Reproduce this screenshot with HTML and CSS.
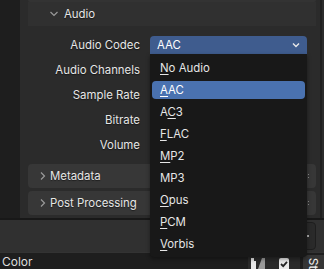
FILE: index.html
```html
<!DOCTYPE html>
<html lang="en">
<head>
    <meta charset="UTF-8">
    <meta name="viewport" content="width=device-width, initial-scale=1.0">
    <title>Output Properties - Audio</title>
    <link rel="stylesheet" href="styles.css">
</head>
<body>
    <div class="screen">
        <div class="top">
            <div class="gutter"></div>
            <div class="props">
                <div class="parent-edge"></div>

                <div class="subpanel">
                    <div class="sub-header">
                        <svg class="chev" width="10" height="10" viewBox="0 0 10 10"><polyline points="1.5,3 5,6.5 8.5,3" /></svg>
                        <span>Audio</span>
                    </div>
                    <div class="sub-body">
                        <div class="row">
                            <span class="label">Audio Codec</span>
                            <div class="field select open">
                                <span>AAC</span>
                                <svg class="drop" width="8" height="6" viewBox="0 0 8 6"><polyline points="1,1.5 4,4.5 7,1.5" /></svg>
                            </div>
                        </div>
                        <div class="row">
                            <span class="label">Audio Channels</span>
                            <div class="field select"><span>Stereo</span></div>
                        </div>
                        <div class="row">
                            <span class="label">Sample Rate</span>
                            <div class="field select"><span>48 kHz</span></div>
                        </div>
                        <div class="row">
                            <span class="label">Bitrate</span>
                            <div class="field num"><span>192</span></div>
                        </div>
                        <div class="row">
                            <span class="label">Volume</span>
                            <div class="field num"><span>1.000</span></div>
                        </div>
                    </div>
                </div>

                <div class="subpanel closed">
                    <div class="sub-header">
                        <svg class="chev" width="10" height="10" viewBox="0 0 10 10"><polyline points="3,1.5 6.5,5 3,8.5" /></svg>
                        <span>Metadata</span>
                        <span class="grip"></span>
                    </div>
                </div>
                <div class="subpanel closed">
                    <div class="sub-header">
                        <svg class="chev" width="10" height="10" viewBox="0 0 10 10"><polyline points="3,1.5 6.5,5 3,8.5" /></svg>
                        <span>Post Processing</span>
                        <span class="grip"></span>
                    </div>
                </div>
            </div>
            <div class="scroll"><div class="scroll-line"></div></div>
        </div>

        <div class="mid">
            <div class="mid-widget"><span class="dot"></span></div>
        </div>

        <div class="status">
            <span class="status-text">Color</span>
            <div class="status-tools">
                <svg class="tool-icon" width="16" height="12" viewBox="0 0 16 12">
                    <rect x="1" y="1" width="5" height="11" fill="#e8e8e8" />
                    <rect x="4" y="1" width="2" height="3" fill="#2a2a2a" />
                    <polygon points="8,12 12,1 15,1 15,12" fill="#9a9a9a" />
                </svg>
                <span class="check">
                    <svg width="10" height="10" viewBox="0 0 10 10"><polyline points="2,5 4.2,7.2 8,2.8" /></svg>
                </span>
            </div>
            <div class="side-tab"><span>St</span></div>
        </div>

        <div class="menu">
            <div class="item"><span><u>N</u>o Audio</span></div>
            <div class="item active"><span><u>A</u>AC</span></div>
            <div class="item"><span>A<u>C</u>3</span></div>
            <div class="item"><span><u>F</u>LAC</span></div>
            <div class="item"><span><u>M</u>P2</span></div>
            <div class="item"><span>MP3</span></div>
            <div class="item"><span><u>O</u>pus</span></div>
            <div class="item"><span><u>P</u>CM</span></div>
            <div class="item"><span><u>V</u>orbis</span></div>
        </div>
    </div>
</body>
</html>
```

FILE: styles.css
```css
* {
    box-sizing: border-box;
}
body {
    margin: 0;
    font-family: "Inter", "DejaVu Sans", sans-serif;
    font-size: 11.4px;
    color: #e6e6e6;
    background: #1d1d1d;
    overflow: hidden;
}
.screen {
    position: relative;
    width: 324px;
    height: 269px;
    display: flex;
    flex-direction: column;
}
.top {
    display: flex;
    height: 218px;
}
.gutter {
    width: 20px;
    background: #1e1e1e;
}
.props {
    flex: 1;
    background: #2b2b2b;
    padding: 0 0 0 8px;
    display: flex;
    flex-direction: column;
}
.parent-edge {
    height: 3px;
    background: #333333;
    border-radius: 0 0 4px 4px;
}
.subpanel {
    display: flex;
    flex-direction: column;
}
.sub-header {
    height: 24px;
    display: flex;
    align-items: center;
    background: #303030;
    padding-left: 21px;
    gap: 5px;
    text-shadow: 0 1px 1px rgba(0, 0, 0, 0.5);
}
.chev polyline {
    fill: none;
    stroke: #9a9a9a;
    stroke-width: 1.2;
}
.sub-body {
    padding: 6px 0 7px 0;
    display: flex;
    flex-direction: column;
}
.row {
    height: 25px;
    display: grid;
    grid-template-columns: 112px 1fr;
    column-gap: 10px;
    align-items: center;
    padding-right: 9px;
}
.label {
    text-align: right;
    color: #e6e6e6;
    text-shadow: 0 1px 1px rgba(0, 0, 0, 0.5);
}
.field {
    height: 18px;
    border-radius: 4px;
    background: #282828;
    display: flex;
    align-items: center;
    padding: 0 7px;
    color: #e6e6e6;
}
.field.num {
    justify-content: center;
    background: #545454;
}
.field.select.open {
    background: #3f5c8e;
    border-radius: 4px 4px 0 0;
    justify-content: space-between;
    color: #ffffff;
}
.drop polyline {
    fill: none;
    stroke: #e8e8e8;
    stroke-width: 1.4;
}
.closed {
    margin-bottom: 3px;
}
.closed .sub-header {
    background: #373737;
    border-radius: 4px;
    padding-left: 10px;
    gap: 2px;
}
.grip {
    margin-left: auto;
    margin-right: 6px;
    width: 3px;
    height: 7px;
    background: radial-gradient(circle, #8a8a8a 0.8px, transparent 1px) 0 0 / 3px 3px;
}
.scroll {
    width: 8px;
    background: #2b2b2b;
    display: flex;
    justify-content: center;
}
.scroll-line {
    width: 2px;
    margin-left: 2px;
    background: #1f1f1f;
}
.mid {
    height: 34px;
    border-top: 2px solid #181818;
    background: #303030;
    display: flex;
    justify-content: flex-end;
    align-items: center;
    padding-right: 8px;
}
.mid-widget {
    width: 40px;
    height: 28px;
    border-radius: 4px;
    background: #2a2a2a;
    border: 1px solid #1e1e1e;
    display: flex;
    align-items: center;
    justify-content: flex-end;
    padding-right: 6px;
}
.dot {
    width: 2px;
    height: 2px;
    background: #aaaaaa;
}
.status {
    flex: 1;
    display: flex;
    align-items: flex-end;
    background: #1e1e1e;
    border-top: 1px solid #333333;
}
.status-text {
    padding-left: 2px;
    font-size: 12px;
    line-height: 14px;
    color: #dedede;
}
.status-tools {
    margin-left: auto;
    width: 52px;
    height: 12px;
    background: #2a2a2a;
    display: flex;
    align-items: flex-end;
    gap: 13px;
    padding-left: 2px;
}
.check {
    width: 10px;
    height: 11px;
    border-radius: 2px 2px 0 0;
    background: #e8e8e8;
    display: flex;
    justify-content: center;
    align-items: center;
}
.check polyline {
    fill: none;
    stroke: #222222;
    stroke-width: 1.8;
}
.side-tab {
    width: 21px;
    height: 14px;
    margin-left: 3px;
    background: #353535;
    border-radius: 4px 0 0 0;
    display: flex;
    justify-content: center;
    overflow: hidden;
}
.side-tab span {
    display: block;
    transform: rotate(90deg);
    font-size: 12px;
    line-height: 12px;
    margin-top: 3px;
    color: #f0f0f0;
}
.menu {
    position: absolute;
    left: 150px;
    top: 54px;
    width: 157px;
    height: 203px;
    background: #181818;
    border-radius: 0 0 4px 4px;
    padding: 3px 2px 2px 2px;
    box-shadow: 0 2px 4px rgba(0, 0, 0, 0.4);
}
.item {
    height: 22px;
    display: flex;
    align-items: center;
}
.item span {
    flex: 1;
    height: 18px;
    line-height: 18px;
    padding-left: 8px;
    border-radius: 4px;
    color: #e6e6e6;
}
.item.active span {
    background: #4a72b0;
    color: #ffffff;
}
.item u {
    text-decoration-thickness: 1px;
    text-underline-offset: 2px;
}
```
